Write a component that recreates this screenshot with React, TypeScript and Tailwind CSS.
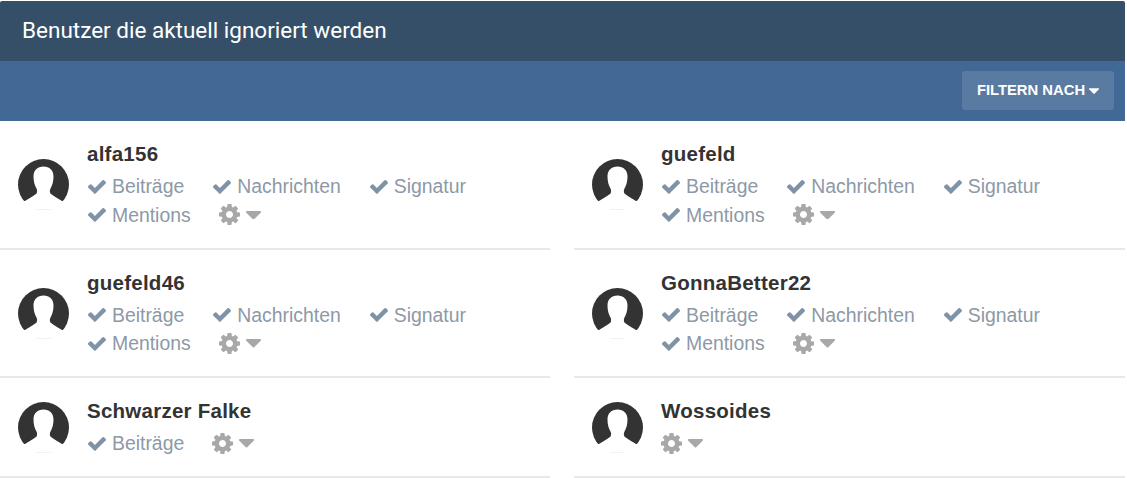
import React from 'react';

type Member = { name: string; actions: string[] };

const members: Member[] = [
  { name: 'alfa156', actions: ['Beiträge', 'Nachrichten', 'Signatur', 'Mentions'] },
  { name: 'guefeld', actions: ['Beiträge', 'Nachrichten', 'Signatur', 'Mentions'] },
  { name: 'guefeld46', actions: ['Beiträge', 'Nachrichten', 'Signatur', 'Mentions'] },
  { name: 'GonnaBetter22', actions: ['Beiträge', 'Nachrichten', 'Signatur', 'Mentions'] },
  { name: 'Schwarzer Falke', actions: ['Beiträge'] },
  { name: 'Wossoides', actions: [] },
];

const CheckIcon = () => (
  <svg viewBox="121 300 1550 1192" className="w-[18px] h-[15px] mr-[6px] ml-px fill-[#7f92a6]">
    <path d="M1671 566q0 40-28 68l-724 724-136 136q-28 28-68 28t-68-28l-136-136-362-362q-28-28-28-68t28-68l136-136q28-28 68-28t68 28l294 295 656-657q28-28 68-28t68 28l136 136q28 28 28 68z" />
  </svg>
);

const CogIcon = () => (
  <svg viewBox="128 128 1536 1536" className="w-[21px] h-[21px] fill-[#a8a8a8]">
    <path d="M1152 896q0-106-75-181t-181-75-181 75-75 181 75 181 181 75 181-75 75-181zm512-109v222q0 12-8 23t-20 13l-185 28q-19 54-39 91 35 50 107 138 10 12 10 25t-9 23q-27 37-99 108t-94 71q-12 0-26-9l-138-108q-44 23-91 38-16 136-29 186-7 28-36 28h-222q-14 0-24.500-8.500t-11.500-21.500l-28-184q-49-16-90-37l-141 107q-10 9-25 9-14 0-25-11-126-114-165-168-7-10-7-23 0-12 8-23 15-21 51-66.500t54-70.500q-27-50-41-99l-183-27q-13-2-21-12.500t-8-23.500v-222q0-12 8-23t19-13l186-28q14-46 39-92-40-57-107-138-10-12-10-24 0-10 9-23 26-36 98.500-107.500t94.500-71.500q13 0 26 10l138 107q44-23 91-38 16-136 29-186 7-28 36-28h222q14 0 24.500 8.500t11.500 21.500l28 184q49 16 90 37l142-107q9-9 24-9 13 0 25 10 129 119 165 170 7 8 7 22 0 12-8 23-15 21-51 66.500t-54 70.500q26 50 41 98l183 28q13 2 21 12.500t8 23.500z" />
  </svg>
);

const CaretIcon = ({ className }: { className: string }) => (
  <svg viewBox="384 640 1024 576" className={className}>
    <path d="M1408 704q0 26-19 45l-448 448q-19 19-45 19t-45-19l-448-448q-19-19-19-45t19-45 45-19h896q26 0 45 19t19 45z" />
  </svg>
);

const Avatar = () => (
  <svg viewBox="0 0 51 51" className="w-[51px] h-[51px] shrink-0">
    <circle cx="25.5" cy="25.5" r="25.5" fill="#333333" />
    <path
      d="M25.500 7.500c-6 0-10 3.800-10 10 0 5 1.200 9 3 12 .8 1.400.8 3.300.2 4.800-.6 1.200-5 3.500-11.700 7.700v9h37v-9c-6.700-4.200-11.100-6.500-11.700-7.700-.6-1.500-.6-3.400.2-4.800 1.800-3 3-7 3-12 0-6.200-4-10-10-10z"
      fill="#ffffff"
    />
    <rect x="0" y="42" width="7" height="9" fill="#ffffff" />
    <rect x="44" y="42" width="7" height="9" fill="#ffffff" />
    <rect x="18" y="50" width="15" height="1" fill="#f2f2f2" />
  </svg>
);

const MemberRow = ({ member }: { member: Member }) => (
  <div className="flex items-center pl-[18px] pt-[19px] pb-[18.5px] border-b-2 border-[#e8e8e8]">
    <Avatar />
    <div className="ml-[18px] flex-1 min-w-0">
      <h3 className="text-[20.5px] leading-[28.5px] mb-[3.5px] font-bold text-[#333333] tracking-[0.25px]">{member.name}</h3>
      <div className="flex flex-wrap gap-x-[28px] text-[19.4px] leading-[28.5px] text-[#8d99a6]">
        {member.actions.map((action) => (
          <span key={action} className="flex items-center">
            <CheckIcon />
            {action}
          </span>
        ))}
        <span className="h-[28.5px] flex items-center">
          <CogIcon />
          <CaretIcon className="w-[15px] h-[8.5px] ml-[6px] fill-[#a8a8a8]" />
        </span>
      </div>
    </div>
  </div>
);

export default function App() {
  return (
    <div className="w-[1125px] pt-px bg-white font-['Liberation_Sans',Arial,sans-serif]">
      <div className="h-[60px] flex items-center px-[22px] bg-[#364f68] rounded-t-[2px]">
        <h2 className="text-[22.5px] text-white font-['Roboto',sans-serif]">Benutzer die aktuell ignoriert werden</h2>
      </div>
      <div className="h-[60px] flex items-center justify-end px-[11px] pb-px bg-[#426895]">
        <button className="h-[39px] w-[152px] flex items-center justify-center rounded-[3px] bg-[#5a7ba1] text-white text-[14.8px] font-bold">
          FILTERN NACH
          <CaretIcon className="w-[10px] h-[6px] ml-[4px] fill-white" />
        </button>
      </div>
      <div className="grid grid-cols-[550px_551px] gap-x-[24px]">
        {members.map((member) => (
          <MemberRow key={member.name} member={member} />
        ))}
      </div>
    </div>
  );
}
